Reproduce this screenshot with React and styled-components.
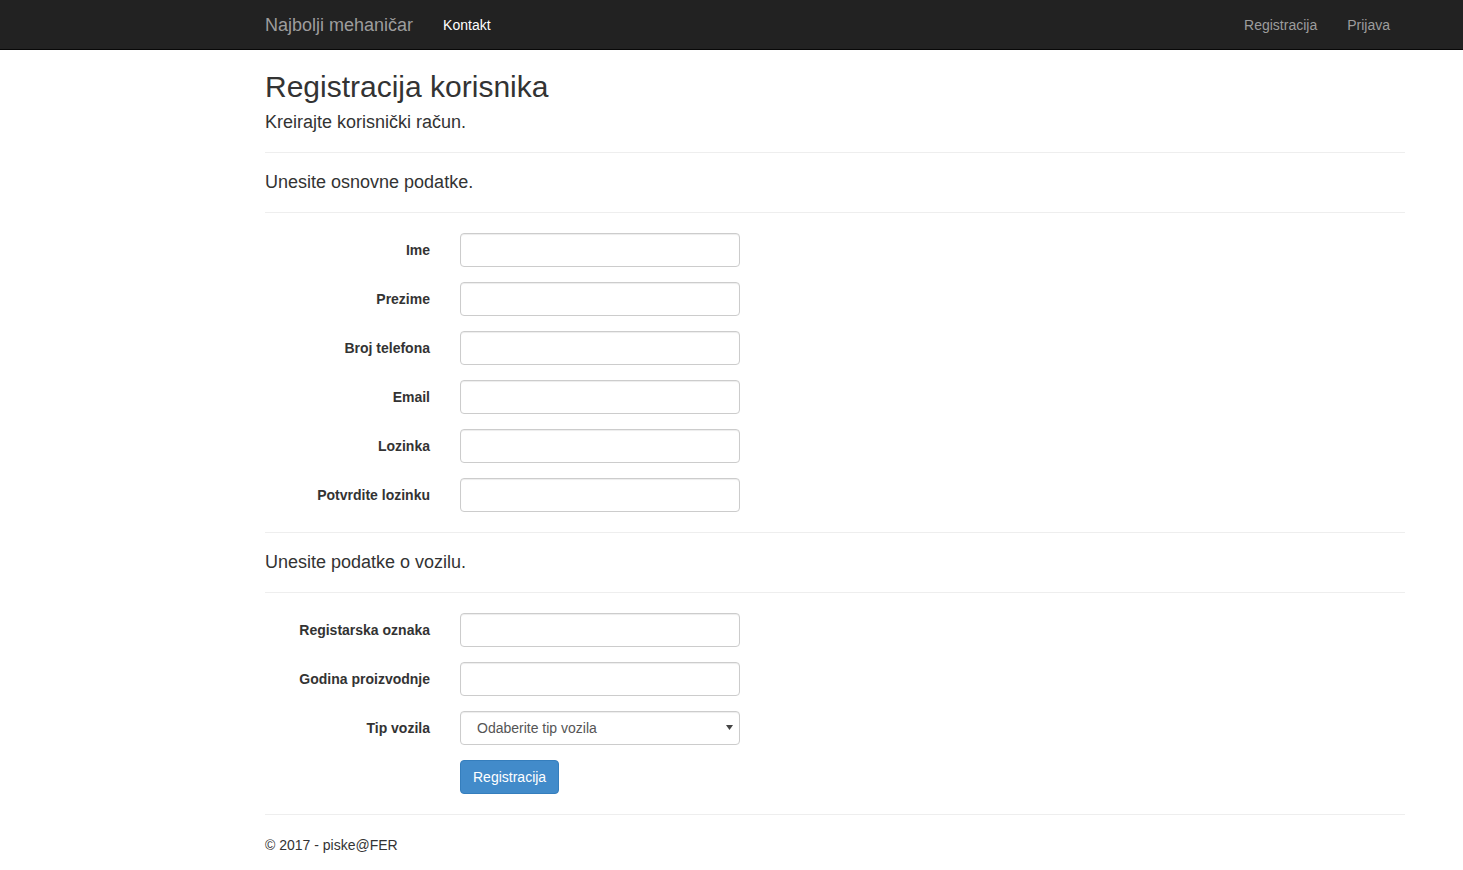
import React from "react";
import styled, { createGlobalStyle } from "styled-components";

const Global = createGlobalStyle`
  * { box-sizing: border-box; }
  html, body { margin: 0; padding: 0; background: #fff; }
  body {
    font-family: "Liberation Sans", Arial, Helvetica, sans-serif;
    font-size: 14px;
    line-height: 1.42857143;
    color: #333;
  }
`;

const Navbar = styled.nav`
  height: 50px;
  background: #222;
  border-bottom: 1px solid #080808;
`;

const NavContainer = styled.div`
  width: 1170px;
  margin-left: 250px;
  padding: 0 15px;
  display: flex;
  align-items: flex-start;
  height: 49px;
`;

const Brand = styled.a`
  display: block;
  font-size: 18px;
  line-height: 20px;
  padding: 15px;
  margin-left: -15px;
  color: #9d9d9d;
  text-decoration: none;
`;

const NavList = styled.ul`
  display: flex;
  list-style: none;
  margin: 0;
  padding: 0;
  margin-left: ${(p) => (p.$right ? "auto" : "0")};
`;

const NavLink = styled.a`
  display: block;
  padding: 15px;
  line-height: 20px;
  font-size: 14px;
  color: ${(p) => (p.$active ? "#fff" : "#9d9d9d")};
  text-decoration: none;
`;

const Container = styled.main`
  width: 1170px;
  margin-left: 250px;
  padding: 0 15px;
  display: flow-root;
`;

const Title = styled.h2`
  font-size: 30px;
  font-weight: 500;
  line-height: 1.1;
  margin: 20px 0 10px;
  color: #333;
`;

const Sub = styled.h4`
  font-size: 18px;
  font-weight: 500;
  line-height: 19px;
  margin: 10px 0 10px;
  color: #333;
`;

const Rule = styled.hr`
  border: 0;
  border-top: 1px solid #eee;
  margin: 20px 0;
  height: 0;
`;

const FormGroup = styled.div`
  display: grid;
  grid-template-columns: 165px 280px;
  column-gap: 30px;
  margin-bottom: 15px;
`;

const Label = styled.label`
  text-align: right;
  font-weight: 700;
  padding-top: 7px;
  line-height: 20px;
  color: #333;
`;

const Input = styled.input`
  display: block;
  width: 280px;
  height: 34px;
  padding: 6px 12px;
  font-family: inherit;
  font-size: 14px;
  line-height: 1.42857143;
  color: #555;
  background: #fff;
  border: 1px solid #ccc;
  border-radius: 4px;
  box-shadow: inset 0 1px 1px rgba(0, 0, 0, 0.075);
  outline: none;
`;

const SelectWrap = styled.div`
  position: relative;
  width: 280px;
`;

const Select = styled.select`
  display: block;
  width: 280px;
  height: 34px;
  padding: 6px 12px 6px 16px;
  font-family: inherit;
  font-size: 14px;
  color: #555;
  background: #fff;
  border: 1px solid #ccc;
  border-radius: 4px;
  box-shadow: inset 0 1px 1px rgba(0, 0, 0, 0.075);
  appearance: none;
  -webkit-appearance: none;
  outline: none;
`;

const Arrow = styled.svg`
  position: absolute;
  right: 7px;
  top: 14px;
  pointer-events: none;
`;

const Button = styled.button`
  grid-column: 2;
  justify-self: start;
  height: 34px;
  padding: 6px 12px;
  font-family: inherit;
  font-size: 14px;
  line-height: 20px;
  color: #fff;
  background: #428bca;
  border: 1px solid #357ebd;
  border-radius: 4px;
  cursor: pointer;
`;

const Footer = styled.footer`
  p {
    margin: 0 0 10px;
  }
`;

const basicFields = [
  "Ime",
  "Prezime",
  "Broj telefona",
  "Email",
  "Lozinka",
  "Potvrdite lozinku",
];

function Field({ label, type }) {
  return (
    <FormGroup>
      <Label>{label}</Label>
      <Input type={type || "text"} />
    </FormGroup>
  );
}

export default function App() {
  return (
    <>
      <Global />
      <Navbar>
        <NavContainer>
          <Brand href="#">Najbolji mehaničar</Brand>
          <NavList>
            <li>
              <NavLink href="#" $active>
                Kontakt
              </NavLink>
            </li>
          </NavList>
          <NavList $right>
            <li>
              <NavLink href="#">Registracija</NavLink>
            </li>
            <li>
              <NavLink href="#">Prijava</NavLink>
            </li>
          </NavList>
        </NavContainer>
      </Navbar>
      <Container>
        <Title>Registracija korisnika</Title>
        <Sub>Kreirajte korisnički račun.</Sub>
        <Rule />
        <Sub>Unesite osnovne podatke.</Sub>
        <Rule />
        {basicFields.map((f, i) => (
          <Field key={f} label={f} type={i >= 4 ? "password" : "text"} />
        ))}
        <Rule />
        <Sub>Unesite podatke o vozilu.</Sub>
        <Rule />
        <Field label="Registarska oznaka" />
        <Field label="Godina proizvodnje" />
        <FormGroup>
          <Label>Tip vozila</Label>
          <SelectWrap>
            <Select defaultValue="">
              <option value="">Odaberite tip vozila</option>
              <option value="1">Osobni automobil</option>
              <option value="2">Motocikl</option>
            </Select>
            <Arrow width="7" height="5" viewBox="0 0 7 5">
              <path d="M0 0 H7 L3.5 5 Z" fill="#444" />
            </Arrow>
          </SelectWrap>
        </FormGroup>
        <FormGroup>
          <Button type="button">Registracija</Button>
        </FormGroup>
        <Rule />
        <Footer>
          <p>© 2017 - piske@FER</p>
        </Footer>
      </Container>
    </>
  );
}
